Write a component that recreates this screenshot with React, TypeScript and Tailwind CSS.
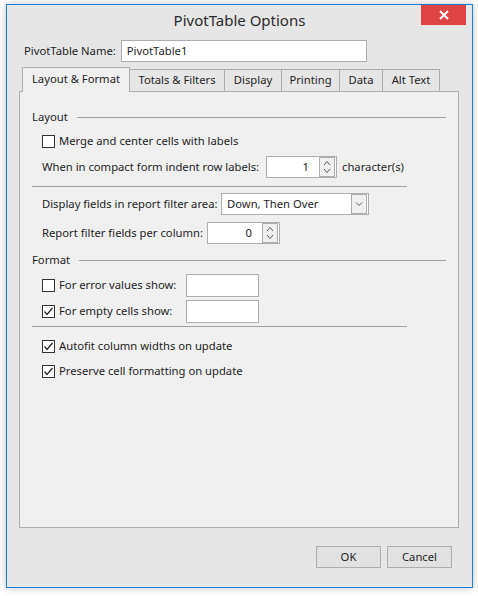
import React from "react";

function Check({ checked }: { checked?: boolean }) {
  return (
    <div className="w-[13px] h-[13px] border border-[#333] bg-white flex items-center justify-center shrink-0">
      {checked && (
        <svg width="11" height="11" viewBox="0 0 11 11">
          <path d="M1.5 5.5 L4 8.5 L9.5 2" fill="none" stroke="#222" strokeWidth="1.2" />
        </svg>
      )}
    </div>
  );
}

function Spinner({ value, width }: { value: string; width: string }) {
  return (
    <div className={`${width} h-[22px] border border-[#adadad] bg-white flex items-center`}>
      <div className="flex-1 text-right pr-[10px]">{value}</div>
      <div className="w-[16px] h-[20px] border border-[#adadad] bg-[#f0f0f0] flex flex-col items-center justify-center mr-px">
        <svg width="10" height="18" viewBox="0 0 10 18">
          <path d="M2 7 L5 3.5 L8 7" fill="none" stroke="#555" strokeWidth="1" />
          <path d="M2 11 L5 14.5 L8 11" fill="none" stroke="#555" strokeWidth="1" />
        </svg>
      </div>
    </div>
  );
}

function SectionHead({ label, line }: { label: string; line: string }) {
  return (
    <div className="h-[22px] flex items-center">
      <span>{label}</span>
      <div className={`${line} flex-1 h-px bg-[#a0a0a0]`}></div>
    </div>
  );
}

const tabs = [
  { name: "Layout & Format", w: "w-[108px]", active: true },
  { name: "Totals & Filters", w: "w-[95px]" },
  { name: "Display", w: "w-[57px]" },
  { name: "Printing", w: "w-[58px]" },
  { name: "Data", w: "w-[43px]" },
  { name: "Alt Text", w: "w-[57px]" },
];

export default function App() {
  return (
    <div
      className="w-[478px] h-[596px] bg-white pt-[4px] pl-[6px] text-[11.25px] text-[#1e1e1e]"
      style={{ fontFamily: '"Noto Sans", "Open Sans", sans-serif' }}
    >
      {/* window */}
      <div className="relative w-[467px] h-[584px] border border-[#1a7fd4] bg-[#e6e6e6] shadow-[0_0_8px_rgba(0,0,0,0.25)] flex flex-col">
        {/* title bar */}
        <div className="h-[30px] flex items-center justify-center text-[15px] text-[#2b2b2b]">
          PivotTable Options
        </div>
        <div className="absolute top-0 right-[6px] w-[45px] h-[20px] bg-[#e04343] flex items-center justify-center">
          <svg width="10" height="10" viewBox="0 0 10 10">
            <path d="M1 1 L9 9 M9 1 L1 9" stroke="white" strokeWidth="2" />
          </svg>
        </div>

        {/* name row */}
        <div className="mt-[5px] h-[22px] flex items-center pl-[17px]">
          <span>PivotTable Name:</span>
          <div className="ml-[5px] w-[246px] h-[22px] border border-[#adadad] bg-white flex items-center pl-[5px]">
            PivotTable1
          </div>
        </div>

        {/* tabs */}
        <div className="mt-[5px] pl-[15px] h-[25px] flex items-end relative z-10 -mb-px">
          {tabs.map((t) =>
            t.active ? (
              <div
                key={t.name}
                className={`${t.w} h-[25px] border border-b-0 border-[#adadad] bg-[#f0f0f0] flex items-center justify-center pb-[1px]`}
              >
                {t.name}
              </div>
            ) : (
              <div
                key={t.name}
                className={`${t.w} h-[23px] border border-l-0 border-[#adadad] bg-[#e6e6e6] flex items-center justify-center`}
              >
                {t.name}
              </div>
            )
          )}
        </div>

        {/* panel */}
        <div className="ml-[12px] w-[440px] h-[437px] border border-[#adadad] bg-[#f0f0f0] pl-[12px] pr-[12px]">
          <div className="mt-[14px]">
            <SectionHead label="Layout" line="ml-[9px]" />
          </div>
          <div className="mt-[2px] h-[22px] flex items-center pl-[10px] gap-[4px]">
            <Check />
            <span>Merge and center cells with labels</span>
          </div>
          <div className="mt-[4px] h-[22px] flex items-center pl-[10px]">
            <span>When in compact form indent row labels:</span>
          </div>
          <div className="-mt-[22px] h-[22px] flex items-center pl-[234px]">
            <Spinner value="1" width="w-[71px]" />
            <span className="ml-[5px]">character(s)</span>
          </div>
          <div className="mt-[8px] w-[375px] h-px bg-[#a0a0a0]"></div>
          <div className="mt-[6px] h-[22px] flex items-center pl-[10px]">
            <span>Display fields in report filter area:</span>
          </div>
          <div className="-mt-[22px] h-[22px] flex items-center pl-[189px]">
            <div className="w-[148px] h-[22px] border border-[#adadad] bg-white flex items-center pl-[5px]">
              <span className="flex-1">Down, Then Over</span>
              <div className="w-[16px] h-[20px] border border-[#adadad] bg-[#f0f0f0] flex items-center justify-center mr-px">
                <svg width="10" height="10" viewBox="0 0 10 10">
                  <path d="M2 3.5 L5 6.5 L8 3.5" fill="none" stroke="#555" strokeWidth="1" />
                </svg>
              </div>
            </div>
          </div>
          <div className="mt-[7px] h-[22px] flex items-center pl-[10px]">
            <span>Report filter fields per column:</span>
          </div>
          <div className="-mt-[22px] h-[22px] flex items-center pl-[175px]">
            <Spinner value="0" width="w-[73px]" />
          </div>
          <div className="mt-[5px]">
            <SectionHead label="Format" line="ml-[9px]" />
          </div>
          <div className="mt-[3px] h-[22px] flex items-center pl-[10px] gap-[4px]">
            <Check />
            <span>For error values show:</span>
          </div>
          <div className="-mt-[22px] h-[22px] flex items-center pl-[154px]">
            <div className="w-[73px] h-[23px] border border-[#adadad] bg-white"></div>
          </div>
          <div className="mt-[4px] h-[22px] flex items-center pl-[10px] gap-[4px]">
            <Check checked />
            <span>For empty cells show:</span>
          </div>
          <div className="-mt-[22px] h-[22px] flex items-center pl-[154px]">
            <div className="w-[73px] h-[23px] border border-[#adadad] bg-white"></div>
          </div>
          <div className="mt-[4px] w-[375px] h-px bg-[#a0a0a0]"></div>
          <div className="mt-[8px] h-[22px] flex items-center pl-[10px] gap-[4px]">
            <Check checked />
            <span>Autofit column widths on update</span>
          </div>
          <div className="mt-[3px] h-[22px] flex items-center pl-[10px] gap-[4px]">
            <Check checked />
            <span>Preserve cell formatting on update</span>
          </div>
        </div>

        {/* buttons */}
        <div className="mt-[18px] flex justify-end gap-[6px] pr-[20px]">
          <button className="w-[65px] h-[22px] border border-[#adadad] bg-[#e1e1e1]">OK</button>
          <button className="w-[65px] h-[22px] border border-[#adadad] bg-[#e1e1e1]">Cancel</button>
        </div>
      </div>
    </div>
  );
}
